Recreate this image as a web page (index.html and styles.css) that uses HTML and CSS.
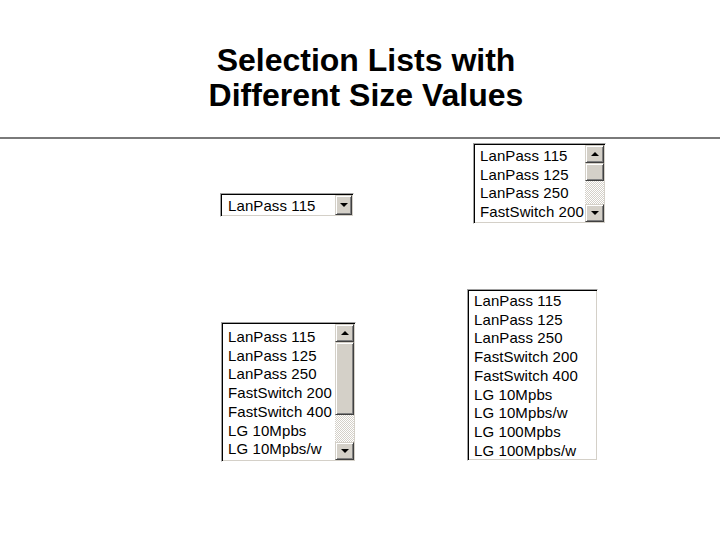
FILE: index.html
```html
<!DOCTYPE html>
<html>
<head>
	<meta charset="utf-8">
	<title>Selection Lists with Different Size Values</title>
	<link rel="stylesheet" href="styles.css">
</head>
<body>
	<h1 class="title">Selection Lists with<br>Different Size Values</h1>
	<hr class="rule">

	<div class="panels">
		<!-- size 1 -->
		<div class="row rowTop">
			<div class="box combo">
				<div class="comboText">LanPass 115</div>
				<div class="btn"><span class="arrowDown"></span></div>
			</div>
			<!-- size 4 -->
			<div class="box list list4">
				<ul class="items">
					<li>LanPass 115</li>
					<li>LanPass 125</li>
					<li>LanPass 250</li>
					<li>FastSwitch 200</li>
				</ul>
				<div class="scrollbar">
					<div class="btn"><span class="arrowUp"></span></div>
					<div class="thumb thumb4"></div>
					<div class="track"></div>
					<div class="btn"><span class="arrowDown"></span></div>
				</div>
			</div>
		</div>

		<div class="row rowBottom">
			<!-- size 7 -->
			<div class="box list list7">
				<ul class="items">
					<li>LanPass 115</li>
					<li>LanPass 125</li>
					<li>LanPass 250</li>
					<li>FastSwitch 200</li>
					<li>FastSwitch 400</li>
					<li>LG 10Mpbs</li>
					<li>LG 10Mpbs/w</li>
				</ul>
				<div class="scrollbar">
					<div class="btn"><span class="arrowUp"></span></div>
					<div class="thumb thumb7"></div>
					<div class="track"></div>
					<div class="btn"><span class="arrowDown"></span></div>
				</div>
			</div>
			<!-- size 9 -->
			<div class="box list list9">
				<ul class="items">
					<li>LanPass 115</li>
					<li>LanPass 125</li>
					<li>LanPass 250</li>
					<li>FastSwitch 200</li>
					<li>FastSwitch 400</li>
					<li>LG 10Mpbs</li>
					<li>LG 10Mpbs/w</li>
					<li>LG 100Mpbs</li>
					<li>LG 100Mpbs/w</li>
				</ul>
			</div>
		</div>
	</div>
</body>
</html>
```

FILE: styles.css
```css
*{
	margin: 0px;
	padding: 0px;
	box-sizing: border-box;
}
body{
	width: 720px;
	height: 540px;
	background-color: white;
	color: black;
	font-family: "Liberation Sans", Arial, sans-serif;
	overflow: hidden;
}
.title{
	padding-top: 43px;
	padding-left: 12px;
	text-align: center;
	font-size: 32px;
	font-weight: bold;
	line-height: 35px;
}
.rule{
	margin-top: 24px;
	height: 2px;
	border: none;
	background-color: #7a7a7a;
}
.panels{
	padding-left: 220px;
}
.row{
	display: flex;
	align-items: flex-start;
}
.rowTop{
	margin-top: 4px;
	gap: 119px;
}
.rowBottom{
	margin-top: 65px;
	gap: 111px;
}

/* sunken frame */
.box{
	display: flex;
	background-color: white;
	border: 1px solid;
	border-color: #a0a0a0 #ffffff #ffffff #a0a0a0;
	box-shadow: inset 1px 1px 0 #000, inset -1px -1px 0 #d4d0c8;
	padding: 1px;
	font-size: 15px;
	letter-spacing: 0.1px;
}
.combo{
	width: 134px;
	height: 24px;
	margin-top: 50px;
}
.comboText{
	flex: 1;
	padding-left: 6px;
	line-height: 21px;
}
.list4{
	width: 133px;
	height: 81px;
}
.list7{
	width: 135px;
	height: 140px;
	margin-left: 1px;
	margin-top: 33px;
}
.list9{
	width: 131px;
	height: 172px;
}
.items{
	flex: 1;
	list-style-type: none;
	padding: 2px 0 0 5px;
	overflow: hidden;
	white-space: nowrap;
}
.list7 .items{
	padding-top: 4px;
}
.list9 .items{
	padding-top: 1px;
}
.items li{
	line-height: 18.7px;
}

/* scrollbar */
.scrollbar{
	width: 19px;
	flex-shrink: 0;
	display: flex;
	flex-direction: column;
	background: repeating-conic-gradient(#d4d0c8 0 25%, #ffffff 0 50%) 0 0/2px 2px;
}
.btn{
	width: 17px;
	height: 18px;
	flex-shrink: 0;
	display: flex;
	align-items: center;
	justify-content: center;
	background-color: #d4d0c8;
	border: 1px solid;
	border-color: #d4d0c8 #404040 #404040 #d4d0c8;
	box-shadow: inset 1px 1px 0 #fff, inset -1px -1px 0 #808080;
}
.scrollbar .btn{
	width: 19px;
}
.combo .btn{
	height: 20px;
}
.thumb{
	flex-shrink: 0;
	background-color: #d4d0c8;
	border: 1px solid;
	border-color: #d4d0c8 #404040 #404040 #d4d0c8;
	box-shadow: inset 1px 1px 0 #fff, inset -1px -1px 0 #808080;
}
.thumb4{
	height: 18px;
}
.thumb7{
	height: 73px;
}
.track{
	flex: 1;
}
.arrowUp,
.arrowDown{
	width: 0px;
	height: 0px;
	border-left: 4px solid transparent;
	border-right: 4px solid transparent;
}
.arrowUp{
	border-bottom: 4px solid black;
}
.arrowDown{
	border-top: 4px solid black;
}
```
